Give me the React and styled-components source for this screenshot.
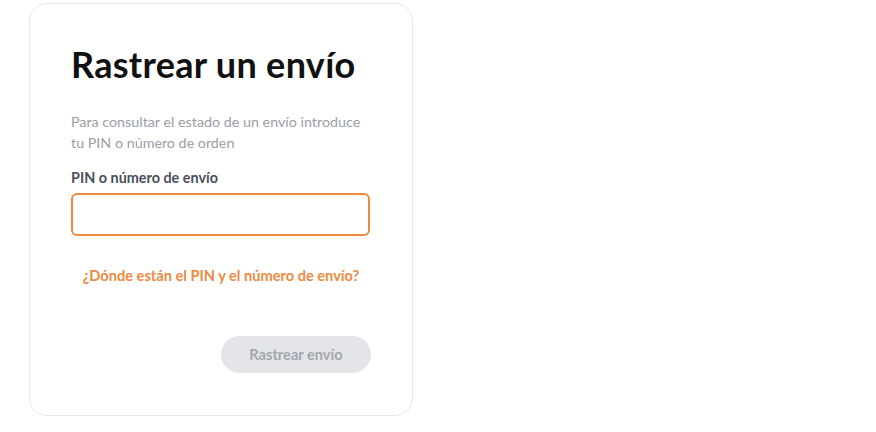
import React, { useState } from 'react';
import styled, { createGlobalStyle } from 'styled-components';

const GlobalStyle = createGlobalStyle`
  body {
    margin: 0;
    background: #ffffff;
    font-family: Lato, 'Open Sans', sans-serif;
  }
`;

const Page = styled.div`
  padding: 3px 0 0 29px;
`;

const Card = styled.div`
  box-sizing: border-box;
  width: 384px;
  height: 413px;
  border: 1px solid #e6e7ea;
  border-radius: 18px;
  background: #ffffff;
  padding: 39px 41px 0;
  display: flex;
  flex-direction: column;
`;

const Title = styled.h1`
  margin: 0;
  font-size: 36px;
  line-height: 42px;
  font-weight: 700;
  color: #111111;
  letter-spacing: 0.3px;
`;

const Intro = styled.p`
  margin: 26px 0 0;
  font-size: 14.3px;
  line-height: 21px;
  color: #9a9ea6;
`;

const Label = styled.label`
  margin-top: 16px;
  font-size: 14.4px;
  line-height: 18px;
  font-weight: 700;
  color: #4a4f5c;
`;

const Input = styled.input`
  box-sizing: border-box;
  margin-top: 6px;
  width: 299px;
  height: 43px;
  border: 2px solid #ef8a3c;
  border-radius: 6px;
  padding: 0 12px;
  font: inherit;
  font-size: 15px;
  outline: none;
`;

const HelpLink = styled.a`
  margin-top: 31px;
  text-align: center;
  font-size: 14.6px;
  line-height: 18px;
  font-weight: 700;
  color: #ec8a3f;
  text-decoration: none;
  cursor: pointer;
`;

const Actions = styled.div`
  display: flex;
  justify-content: flex-end;
  margin-top: 51px;
`;

const Button = styled.button`
  width: 150px;
  height: 37px;
  border: none;
  border-radius: 19px;
  background: #e4e5e8;
  color: #a3a6ad;
  font-family: inherit;
  font-size: 14.6px;
  font-weight: 700;
  cursor: ${(props) => (props.disabled ? 'default' : 'pointer')};
`;

export default function App() {
  const [pin, setPin] = useState('');

  return (
    <>
      <GlobalStyle />
      <Page>
        <Card>
          <Title>Rastrear un envío</Title>
          <Intro>
            Para consultar el estado de un envío introduce
            <br />
            tu PIN o número de orden
          </Intro>
          <Label htmlFor='pin'>PIN o número de envío</Label>
          <Input id='pin' value={pin} onChange={(e) => setPin(e.target.value)} />
          <HelpLink>¿Dónde están el PIN y el número de envío?</HelpLink>
          <Actions>
            <Button disabled={!pin}>Rastrear envío</Button>
          </Actions>
        </Card>
      </Page>
    </>
  );
}
